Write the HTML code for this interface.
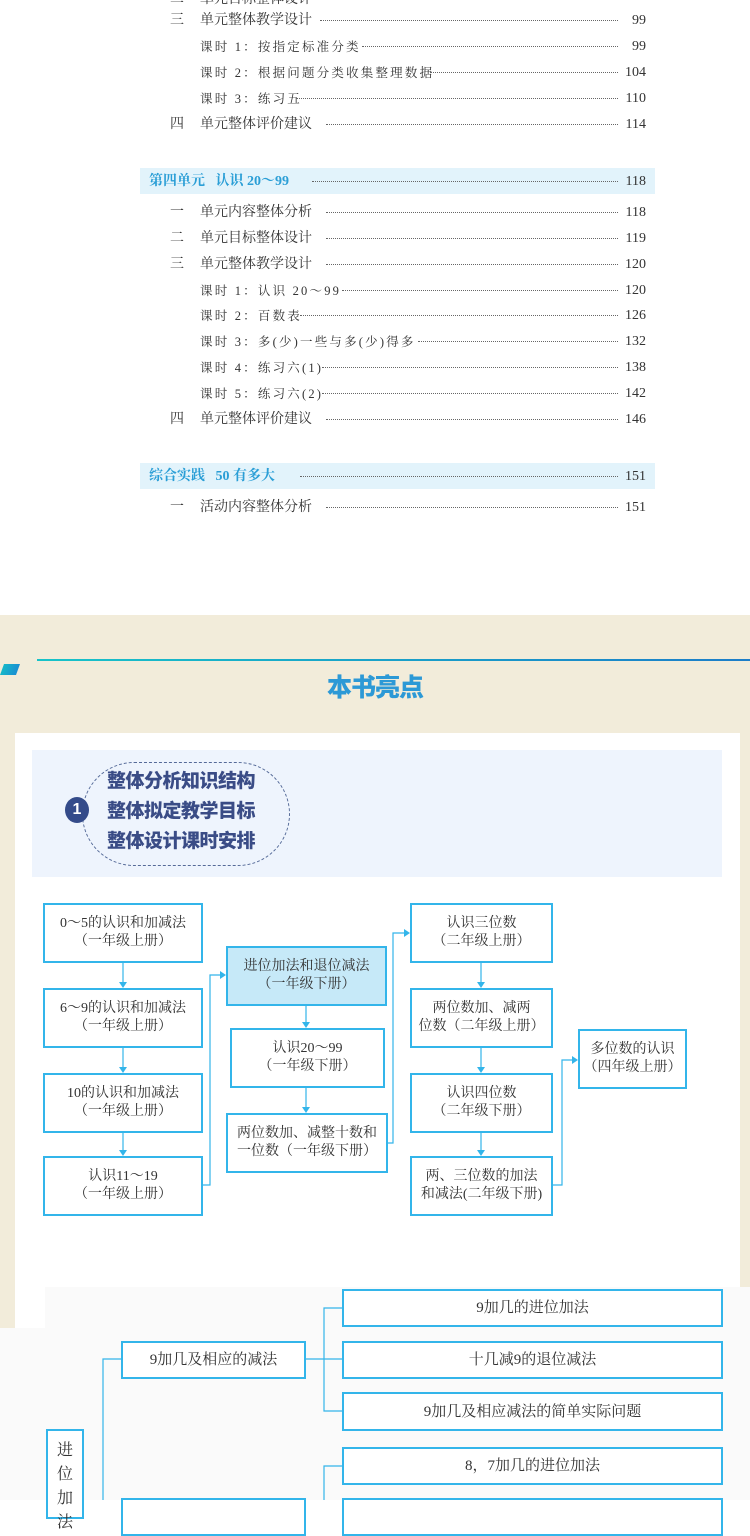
<!DOCTYPE html>
<html><head><meta charset="utf-8"><style>
*{margin:0;padding:0;box-sizing:border-box}
body{width:750px;height:1500px;position:relative;overflow:hidden;background:#fff;font-family:"Liberation Serif","Noto Serif CJK SC",serif;color:#333}
.r{position:absolute;font-size:14px;line-height:16px;white-space:nowrap;color:#333}
.k{font-size:12.5px;letter-spacing:2.2px}
.n{position:absolute;left:600px;width:46px;text-align:right;font-size:14px;line-height:16px;color:#333}
.dots{position:absolute;height:2px;border-bottom:1.5px dotted #666}
.bar{position:absolute;left:140px;width:515px;height:26px;background:#e2f3fb}
.bt{color:#2a9ed6;font-weight:bold}
.box{position:absolute;border:2px solid #33b5ea;background:#fff;display:flex;align-items:center;justify-content:center;text-align:center;font-size:14px;line-height:18px;color:#333}
</style></head><body>

<!-- TOC -->
<div class="r" style="left:170px;top:-8px">二</div><div class="r" style="left:200px;top:-8px">单元目标整体设计</div>
<div class="r" style="left:170px;top:13px">三</div><div class="r" style="left:200px;top:13px">单元整体教学设计</div><div class="dots" style="left:320px;width:298px;top:19px"></div><div class="n" style="top:13px">99</div>
<div class="r k" style="left:200px;top:39px">课时 1：按指定标准分类</div><div class="dots" style="left:362px;width:256px;top:45px"></div><div class="n" style="top:39px">99</div>
<div class="r k" style="left:200px;top:65px">课时 2：根据问题分类收集整理数据</div><div class="dots" style="left:430px;width:188px;top:71px"></div><div class="n" style="top:65px">104</div>
<div class="r k" style="left:200px;top:91px">课时 3：练习五</div><div class="dots" style="left:296px;width:322px;top:97px"></div><div class="n" style="top:91px">110</div>
<div class="r" style="left:170px;top:117px">四</div><div class="r" style="left:200px;top:117px">单元整体评价建议</div><div class="dots" style="left:326px;width:292px;top:123px"></div><div class="n" style="top:117px">114</div>

<div class="bar" style="top:168px"></div>
<div class="r bt" style="left:149px;top:174px">第四单元&nbsp;&nbsp;&nbsp;认识 20～99</div><div class="dots" style="left:312px;width:306px;top:180px"></div><div class="n" style="top:174px">118</div>
<div class="r" style="left:170px;top:205px">一</div><div class="r" style="left:200px;top:205px">单元内容整体分析</div><div class="dots" style="left:326px;width:292px;top:211px"></div><div class="n" style="top:205px">118</div>
<div class="r" style="left:170px;top:231px">二</div><div class="r" style="left:200px;top:231px">单元目标整体设计</div><div class="dots" style="left:326px;width:292px;top:237px"></div><div class="n" style="top:231px">119</div>
<div class="r" style="left:170px;top:257px">三</div><div class="r" style="left:200px;top:257px">单元整体教学设计</div><div class="dots" style="left:326px;width:292px;top:263px"></div><div class="n" style="top:257px">120</div>
<div class="r k" style="left:200px;top:283px">课时 1：认识 20～99</div><div class="dots" style="left:342px;width:276px;top:289px"></div><div class="n" style="top:283px">120</div>
<div class="r k" style="left:200px;top:308px">课时 2：百数表</div><div class="dots" style="left:300px;width:318px;top:314px"></div><div class="n" style="top:308px">126</div>
<div class="r k" style="left:200px;top:334px">课时 3：多(少)一些与多(少)得多</div><div class="dots" style="left:418px;width:200px;top:340px"></div><div class="n" style="top:334px">132</div>
<div class="r k" style="left:200px;top:360px">课时 4：练习六(1)</div><div class="dots" style="left:322px;width:296px;top:366px"></div><div class="n" style="top:360px">138</div>
<div class="r k" style="left:200px;top:386px">课时 5：练习六(2)</div><div class="dots" style="left:322px;width:296px;top:392px"></div><div class="n" style="top:386px">142</div>
<div class="r" style="left:170px;top:412px">四</div><div class="r" style="left:200px;top:412px">单元整体评价建议</div><div class="dots" style="left:326px;width:292px;top:418px"></div><div class="n" style="top:412px">146</div>

<div class="bar" style="top:463px"></div>
<div class="r bt" style="left:149px;top:469px">综合实践&nbsp;&nbsp;&nbsp;50 有多大</div><div class="dots" style="left:300px;width:318px;top:475px"></div><div class="n" style="top:469px">151</div>
<div class="r" style="left:170px;top:500px">一</div><div class="r" style="left:200px;top:500px">活动内容整体分析</div><div class="dots" style="left:326px;width:292px;top:506px"></div><div class="n" style="top:500px">151</div>

<!-- beige section -->
<div style="position:absolute;left:0;top:615px;width:750px;height:713px;background:#f2ecda"></div>
<div style="position:absolute;left:2px;top:664px;width:16px;height:11px;background:linear-gradient(90deg,#16b8c8,#1a8fd2);transform:skewX(-20deg)"></div>
<div style="position:absolute;left:37px;top:659px;width:713px;height:2px;background:linear-gradient(90deg,#17c3c8,#1c7dc8)"></div>
<div style="position:absolute;left:0;width:750px;top:668px;text-align:center;font-family:'Liberation Sans','Noto Sans CJK SC',sans-serif;font-weight:900;font-size:25px;color:#2c99d6;letter-spacing:-1px">本书亮点</div>
<div style="position:absolute;left:15px;top:733px;width:725px;height:600px;background:#fff"></div>
<div style="position:absolute;left:32px;top:750px;width:690px;height:127px;background:#eef4fd"></div>
<div style="position:absolute;left:82px;top:762px;width:208px;height:104px;border:1.5px dashed #556a98;border-radius:60px"></div>
<div style="position:absolute;left:65px;top:797px;width:24px;height:26px;border-radius:50%;background:#344b8a;color:#fff;font:bold 16px/26px 'Liberation Sans',sans-serif;text-align:center">1</div>
<div style="position:absolute;left:107px;top:767px;font-family:'Liberation Sans','Noto Sans CJK SC',sans-serif;font-weight:900;font-size:19px;line-height:30px;color:#3a4c86;letter-spacing:-0.5px">整体分析知识结构<br>整体拟定教学目标<br>整体设计课时安排</div>

<!-- flowchart 1 connectors -->
<svg style="position:absolute;left:0;top:0" width="750" height="1500">
<g stroke="#33b5ea" stroke-width="1.2" fill="none">
<line x1="123" y1="963" x2="123" y2="984"/><line x1="123" y1="1048" x2="123" y2="1069"/><line x1="123" y1="1133" x2="123" y2="1152"/>
<polyline points="203,1185 210,1185 210,975 222,975"/>
<line x1="306" y1="1005" x2="306" y2="1024"/><line x1="306" y1="1088" x2="306" y2="1109"/>
<polyline points="388,1143 393,1143 393,933 406,933"/>
<line x1="481" y1="963" x2="481" y2="984"/><line x1="481" y1="1048" x2="481" y2="1069"/><line x1="481" y1="1133" x2="481" y2="1152"/>
<polyline points="553,1185 562,1185 562,1060 574,1060"/>
</g>
<g fill="#33b5ea">
<path d="M119,982 L127,982 L123,988Z"/><path d="M119,1067 L127,1067 L123,1073Z"/><path d="M119,1150 L127,1150 L123,1156Z"/>
<path d="M220,971 L220,979 L226,975Z"/><path d="M302,1022 L310,1022 L306,1028Z"/><path d="M302,1107 L310,1107 L306,1113Z"/>
<path d="M404,929 L404,937 L410,933Z"/>
<path d="M477,982 L485,982 L481,988Z"/><path d="M477,1067 L485,1067 L481,1073Z"/><path d="M477,1150 L485,1150 L481,1156Z"/>
<path d="M572,1056 L572,1064 L578,1060Z"/>
</g>
</svg>
<div class="box" style="left:43px;top:903px;width:160px;height:60px">0～5的认识和加减法<br>（一年级上册）</div>
<div class="box" style="left:43px;top:988px;width:160px;height:60px">6～9的认识和加减法<br>（一年级上册）</div>
<div class="box" style="left:43px;top:1073px;width:160px;height:60px">10的认识和加减法<br>（一年级上册）</div>
<div class="box" style="left:43px;top:1156px;width:160px;height:60px">认识11～19<br>（一年级上册）</div>
<div class="box" style="left:226px;top:946px;width:161px;height:60px;background:#c6e9f8">进位加法和退位减法<br>（一年级下册）</div>
<div class="box" style="left:230px;top:1028px;width:155px;height:60px">认识20～99<br>（一年级下册）</div>
<div class="box" style="left:226px;top:1113px;width:162px;height:60px">两位数加、减整十数和<br>一位数（一年级下册）</div>
<div class="box" style="left:410px;top:903px;width:143px;height:60px">认识三位数<br>（二年级上册）</div>
<div class="box" style="left:410px;top:988px;width:143px;height:60px">两位数加、减两<br>位数（二年级上册）</div>
<div class="box" style="left:410px;top:1073px;width:143px;height:60px">认识四位数<br>（二年级下册）</div>
<div class="box" style="left:410px;top:1156px;width:143px;height:60px">两、三位数的加法<br>和减法(二年级下册)</div>
<div class="box" style="left:578px;top:1029px;width:109px;height:60px">多位数的认识<br>（四年级上册）</div>

<!-- flowchart 2 -->
<div style="position:absolute;left:45px;top:1287px;width:705px;height:213px;background:#fafafa"></div>
<div style="position:absolute;left:0;top:1328px;width:45px;height:172px;background:#fafafa"></div>
<svg style="position:absolute;left:0;top:0" width="750" height="1500">
<g stroke="#33b5ea" stroke-width="1.2" fill="none">
<polyline points="342,1308 324,1308 324,1411 342,1411"/><line x1="305" y1="1359" x2="342" y2="1359"/>
<polyline points="342,1466 324,1466 324,1500"/>
<polyline points="121,1359 103,1359 103,1500"/>
</g>
</svg>
<div class="box" style="left:342px;top:1289px;width:381px;height:38px;font-size:15px">9加几的进位加法</div>
<div class="box" style="left:342px;top:1341px;width:381px;height:38px;font-size:15px">十几减9的退位减法</div>
<div class="box" style="left:342px;top:1392px;width:381px;height:39px;font-size:15px">9加几及相应减法的简单实际问题</div>
<div class="box" style="left:342px;top:1447px;width:381px;height:38px;font-size:15px">8，7加几的进位加法</div>
<div class="box" style="left:342px;top:1498px;width:381px;height:38px"></div>
<div class="box" style="left:121px;top:1341px;width:185px;height:38px;font-size:15px">9加几及相应的减法</div>
<div class="box" style="left:121px;top:1498px;width:185px;height:38px"></div>
<div class="box" style="left:46px;top:1429px;width:38px;height:90px;align-items:flex-start;padding-top:8px;font-size:16px;line-height:24px">进<br>位<br>加<br>法</div>
</body></html>
